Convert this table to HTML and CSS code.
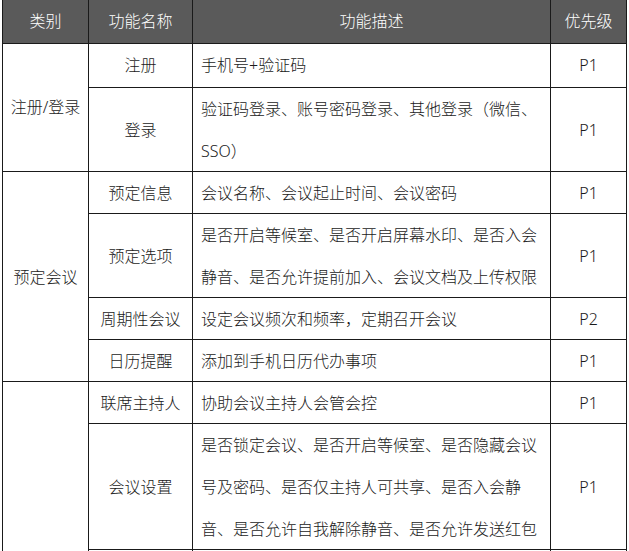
FILE: index.html
```html
<!DOCTYPE html>
<html lang="zh-CN">
<head>
<meta charset="utf-8">
<title>功能列表</title>
<link rel="stylesheet" href="styles.css">
</head>
<body>
<table class="spec">
  <colgroup>
    <col class="w-cat">
    <col class="w-name">
    <col class="w-desc">
    <col class="w-pri">
  </colgroup>
  <thead>
    <tr>
      <th><div class="c">类别</div></th>
      <th><div class="c">功能名称</div></th>
      <th><div class="c">功能描述</div></th>
      <th><div class="c">优先级</div></th>
    </tr>
  </thead>
  <tbody>
    <tr class="first">
      <td class="mid" rowspan="2"><div class="c">注册/登录</div></td>
      <td class="mid"><div class="c">注册</div></td>
      <td class="desc"><div class="c">手机号+验证码</div></td>
      <td class="mid"><div class="c">P1</div></td>
    </tr>
    <tr>
      <td class="mid"><div class="c">登录</div></td>
      <td class="desc"><div class="c">验证码登录、账号密码登录、其他登录（微信、<br>SSO）</div></td>
      <td class="mid"><div class="c">P1</div></td>
    </tr>
    <tr>
      <td class="mid" rowspan="4"><div class="c">预定会议</div></td>
      <td class="mid"><div class="c">预定信息</div></td>
      <td class="desc"><div class="c">会议名称、会议起止时间、会议密码</div></td>
      <td class="mid"><div class="c">P1</div></td>
    </tr>
    <tr>
      <td class="mid"><div class="c">预定选项</div></td>
      <td class="desc"><div class="c">是否开启等候室、是否开启屏幕水印、是否入会<br>静音、是否允许提前加入、会议文档及上传权限</div></td>
      <td class="mid"><div class="c">P1</div></td>
    </tr>
    <tr>
      <td class="mid"><div class="c">周期性会议</div></td>
      <td class="desc"><div class="c">设定会议频次和频率，定期召开会议</div></td>
      <td class="mid"><div class="c">P2</div></td>
    </tr>
    <tr>
      <td class="mid"><div class="c">日历提醒</div></td>
      <td class="desc"><div class="c">添加到手机日历代办事项</div></td>
      <td class="mid"><div class="c">P1</div></td>
    </tr>
    <tr>
      <td class="mid" rowspan="5"><div class="c">会中控制</div></td>
      <td class="mid"><div class="c">联席主持人</div></td>
      <td class="desc"><div class="c">协助会议主持人会管会控</div></td>
      <td class="mid"><div class="c">P1</div></td>
    </tr>
    <tr>
      <td class="mid"><div class="c">会议设置</div></td>
      <td class="desc"><div class="c">是否锁定会议、是否开启等候室、是否隐藏会议<br>号及密码、是否仅主持人可共享、是否入会静<br>音、是否允许自我解除静音、是否允许发送红包</div></td>
      <td class="mid"><div class="c">P1</div></td>
    </tr>
    <tr>
      <td class="mid"><div class="c">参会者管理</div></td>
      <td class="desc"><div class="c">全体静音、解除全体静音、移出参会者、设为<br>联席主持人、修改参会者名称、查看参会者<br>列表</div></td>
      <td class="mid"><div class="c">P1</div></td>
    </tr>
    <tr>
      <td class="mid"><div class="c">会议互动</div></td>
      <td class="desc"><div class="c">聊天、举手、表情互动、发送红包、会议<br>投票</div></td>
      <td class="mid"><div class="c">P2</div></td>
    </tr>
    <tr>
      <td class="mid"><div class="c">会议录制</div></td>
      <td class="desc"><div class="c">云录制、本地录制</div></td>
      <td class="mid"><div class="c">P2</div></td>
    </tr>
  </tbody>
</table>
</body>
</html>
```

FILE: styles.css
```css
html, body {
  margin: 0;
  padding: 0;
  overflow: hidden;
  background: #ffffff;
}

body {
  font-family: "Noto Sans", "Noto Sans CJK SC", sans-serif;
  font-size: 16px;
  font-weight: 300;
  color: #1a1a1a;
}

.spec {
  border-collapse: collapse;
  table-layout: fixed;
  width: 625px;
  margin: 0 0 0 2px;
}

.w-cat { width: 86px; }
.w-name { width: 104px; }
.w-desc { width: 358px; }
.w-pri { width: 76px; }

.spec th,
.spec td {
  border: 1px solid #1a1a1a;
  padding: 0;
  vertical-align: middle;
}

.spec thead th {
  background: #5a5a5a;
  color: #ffffff;
  font-weight: 300;
  text-align: center;
  border-top: none;
}

.spec thead .c {
  line-height: 43px;
  margin-bottom: 0;
}

.c {
  line-height: 42px;
  margin-bottom: -1px;
}

.first .c {
  line-height: 43px;
  margin-bottom: 0;
}

.mid {
  text-align: center;
}

.desc {
  text-align: left;
}

.desc .c {
  padding-left: 8px;
}
```
